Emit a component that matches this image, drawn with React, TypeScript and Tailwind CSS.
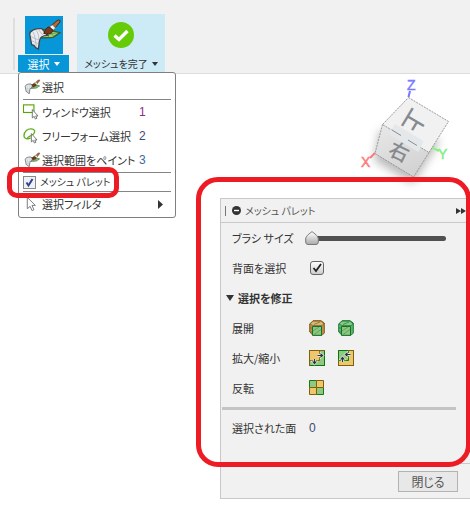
import React, { useState } from "react";

function PaintIcon({ className }: { className: string }) {
  return (
    <svg viewBox="0 0 114 114" className={className} aria-hidden="true">
      <path d="M46 40 L72 42 L105 50 L84 64 L48 66 Z" fill="#9fce7c" stroke="#345f2b" strokeWidth="4" />
      <path d="M60 44 L72 64 M76 46 L86 62 M52 58 L98 50" stroke="#4f8a3c" strokeWidth="2" fill="none" />
      <path
        d="M14 54 C14 44 32 36 50 38 L68 58 C52 58 44 64 43 76 L40 99 L32 95 L27 88 L20 86 Z"
        fill="#e9ebef"
        stroke="#3f474e"
        strokeWidth="4"
      />
      <path
        d="M24 48 C30 58 32 76 34 92 M34 43 C42 54 41 64 41 72 M18 62 L40 72 M20 74 L40 84 M40 40 L54 58"
        stroke="#a5adb5"
        strokeWidth="2"
        fill="none"
      />
      <path d="M80 28 L96 14 Q106 8 105 18 L90 36 Z" fill="#b86a33" stroke="#4c2614" strokeWidth="3" />
      <path d="M73 33 L82 26 L92 36 L84 43 Z" fill="#f4f4f4" stroke="#555" strokeWidth="2" />
      <path d="M56 52 C60 48 61 34 73 33 L84 43 C82 54 68 56 56 52 Z" fill="#7b3818" stroke="#42200f" strokeWidth="3" />
    </svg>
  );
}

function Pointer() {
  return <path d="M11 8 V19 L13.5 17 L15 20.5 L17 19.5 L15.5 16.5 H18.5 Z" fill="#fff" stroke="#555" strokeWidth="1" />;
}

function WindowIcon() {
  return (
    <svg viewBox="0 0 20 22" className="h-[22px] w-5" aria-hidden="true">
      <rect x=".5" y="3.5" width="11" height="8" fill="#fff" stroke="#55a800" strokeWidth="1.2" />
      <g transform="translate(1 2) scale(.8)">
        <Pointer />
      </g>
    </svg>
  );
}

function LassoIcon() {
  return (
    <svg viewBox="0 0 20 22" className="h-[22px] w-5" aria-hidden="true">
      <path
        d="M8 13 C5 15 1 14 1 11 C1 6 5 3 9 3.5 C13 4 13 7 11 9 C9 11 5 11 4.5 13.5"
        fill="none"
        stroke="#62b01b"
        strokeWidth="1.4"
      />
      <g transform="translate(0 2) scale(.8)">
        <Pointer />
      </g>
    </svg>
  );
}

function FilterIcon() {
  return (
    <svg viewBox="0 0 20 22" className="h-[22px] w-5" aria-hidden="true">
      <path d="M4.5 4 V16 L7.5 13.5 L9.5 18 L11.5 17 L9.5 12.5 H13 Z" fill="#fff" stroke="#777" />
    </svg>
  );
}

function BlockIcon({ green }: { green?: boolean }) {
  const line = green ? "#1d7a38" : "#80601c";
  const fill = green ? "#63b568" : "#b98f4c";
  return (
    <svg viewBox="0 0 16 16" className="size-4" aria-hidden="true">
      <path d="M4 .7 H12 L15.3 3 V13 L13 15.3 H4 L.7 12 V4 Z" fill={fill} stroke={line} />
      <path d="M1 4 L4 1.2 H12 L15 4 L13 5.5 H4 Z" fill={green ? "#8bcb88" : "#d8b87c"} stroke={line} strokeWidth=".7" />
      <path d="M1 8 H4 M1 12 H4 M5 4.500 L11 2" stroke={line} strokeWidth=".7" fill="none" />
      <path d="M3.500 6.500 H12.500 V15.300 H3.500 Z" fill="#8fc584" stroke="#147326" />
      <path d="M4 11 L10 7 M5 14.500 L12 9.500" stroke="#4f9a4c" strokeWidth=".8" />
    </svg>
  );
}

function Arrows({ line, heads }: { line: string; heads: string }) {
  return (
    <>
      <path d={line} stroke="#e3ecd6" strokeWidth="3" fill="none" />
      <path d={heads} stroke="#e3ecd6" strokeWidth="1.4" fill="#e3ecd6" />
      <path d={line} stroke="#26343b" strokeWidth="1.2" fill="none" />
      <path d={heads} fill="#26343b" />
    </>
  );
}

function GrowIcon() {
  return (
    <svg viewBox="0 0 16 16" className="size-4" aria-hidden="true">
      <rect x=".5" y=".5" width="15" height="15" fill="#8ec982" stroke="#80600a" />
      <path d="M1 1 H10.5 V10.5 H1 Z" fill="#eec76c" />
      <path d="M10.5 1 V10.5 H1" fill="none" stroke="#80600a" />
      <path d="M15.5 1 V15.5 H1" fill="none" stroke="#08780e" />
      <Arrows line="M8.500 5.500 H12 M5.500 9 V12" heads="M11.500 3 L14.500 5.500 L11.500 8 Z M3 11.500 L5.500 14.500 L8 11.500 Z" />
    </svg>
  );
}

function ShrinkIcon() {
  return (
    <svg viewBox="0 0 16 16" className="size-4" aria-hidden="true">
      <rect x=".5" y=".5" width="15" height="15" fill="#eec76c" stroke="#80600a" />
      <path d="M.5 .5 H10.5 V10.5 H.5 Z" fill="#8ec982" stroke="#08780e" />
      <Arrows line="M12.500 4.500 H9 M4.500 12 V9" heads="M9.500 2 L6.500 4.500 L9.500 7 Z M2 9.500 L4.500 6.500 L7 9.500 Z" />
    </svg>
  );
}

function InvertIcon() {
  return (
    <svg viewBox="0 0 16 16" className="size-4" aria-hidden="true">
      <path d="M.5 .5 H7.500 V7.500 H.5 Z M7.500 7.500 H14.500 V14.500 H7.500 Z" fill="#8ec982" stroke="#187518" />
      <path d="M7.500 .5 H14.500 V7.500 H7.500 Z M.5 7.500 H7.500 V14.500 H.5 Z" fill="#eec76c" stroke="#80600a" />
    </svg>
  );
}

function Toolbar() {
  return (
    <header className="flex h-[74px] items-start border-b border-[#dcdcdc] bg-[#f1f1f1] pl-[13px]">
      <span className="mt-[18px] h-[52px] w-0.5 bg-[#dedede]" />
      <button type="button" className="mt-4 ml-[3px] flex w-[51px] flex-col items-center gap-px text-white">
        <span className="size-[38px] bg-[#0796d8]">
          <PaintIcon className="size-[38px]" />
        </span>
        <span className="flex h-[17px] w-full items-center justify-center gap-1 bg-[#0796d8]">
          選択
          <svg viewBox="0 0 6 4" className="h-1 w-1.5" aria-hidden="true">
            <path d="M0 0 H6 L3 4 Z" fill="currentColor" />
          </svg>
        </span>
      </button>
      <button type="button" className="mt-3.5 ml-2 flex h-[58px] w-[88px] flex-col items-center bg-[#cdeaf7] pt-2">
        <svg viewBox="0 0 26 26" className="size-[26px]" aria-hidden="true">
          <circle cx="13" cy="13" r="13" fill="#65cb06" />
          <path d="M6.5 13.5 L11 17.5 L19.5 9" fill="none" stroke="#fff" strokeWidth="3.4" />
        </svg>
        <span className="mt-[7px] flex h-[17px] items-center gap-1 text-[10px] whitespace-nowrap">
          メッシュを完了
          <svg viewBox="0 0 6 4" className="h-1 w-1.5" aria-hidden="true">
            <path d="M0 0 H6 L3 4 Z" fill="currentColor" />
          </svg>
        </span>
      </button>
    </header>
  );
}

function MenuItem({ icon, label, shortcut }: { icon: React.ReactNode; label: string; shortcut?: React.ReactNode }) {
  return (
    <button type="button" className="flex h-6 w-full items-center whitespace-nowrap">
      <span className="flex w-[19px] shrink-0 items-center">{icon}</span>
      <span className="text-left">{label}</span>
      {shortcut}
    </button>
  );
}

function Shortcut({ value, className }: { value: string; className: string }) {
  return <span className={`absolute left-[120px] font-["Liberation_Sans"] text-xs ${className}`}>{value}</span>;
}

function SelectMenu() {
  return (
    <div className="absolute top-[72px] left-[18px] w-[158px] rounded-[3px] border border-[#7f7f7f] bg-white px-1 pt-0.5 pb-px">
      <MenuItem icon={<PaintIcon className="size-[18px]" />} label="選択" />
      <hr className="border-[#858585]" />
      <MenuItem icon={<WindowIcon />} label="ウィンドウ選択" shortcut={<Shortcut value="1" className="text-[#8d2a80]" />} />
      <MenuItem icon={<LassoIcon />} label="フリーフォーム選択" shortcut={<Shortcut value="2" className="text-[#41477d]" />} />
      <MenuItem
        icon={<PaintIcon className="size-[18px]" />}
        label="選択範囲をペイント"
        shortcut={<Shortcut value="3" className="text-[#3c6c9b]" />}
      />
      <div className="relative flex h-5 items-center border-y border-[#858585]">
        <label className="flex items-center gap-1 text-[10px] whitespace-nowrap">
          <span className="relative size-[13px]">
            <input
              type="checkbox"
              defaultChecked
              className="peer block size-[13px] appearance-none border border-[#888] bg-[#eef1f5]"
            />
            <svg viewBox="0 0 13 13" className="pointer-events-none absolute inset-0 hidden peer-checked:block" aria-hidden="true">
              <path d="M3.5 6.5 L5.5 9.5 L9.5 3" fill="none" stroke="#31428e" strokeWidth="2" />
            </svg>
          </span>
          メッシュ パレット
        </label>
        <div className="pointer-events-none absolute -top-1.5 -left-4 h-[31px] w-[112px] rounded-[10px] border-5 border-[#ed1c24]" />
      </div>
      <MenuItem
        icon={<FilterIcon />}
        label="選択フィルタ"
        shortcut={
          <svg viewBox="0 0 5 9" className="mr-2 ml-auto h-[9px] w-[5px]" aria-hidden="true">
            <path d="M0 0 L5 4.5 L0 9 Z" fill="#333" />
          </svg>
        }
      />
    </div>
  );
}

function ViewCube() {
  return (
    <svg viewBox="350 70 120 125" className="absolute top-[70px] left-[350px] h-[125px] w-[120px]" role="img" aria-label="ビューキューブ">
      <defs>
        <linearGradient id="front" x1="0" y1="0" x2=".4" y2="1">
          <stop offset="0" stopColor="#e9e9e9" />
          <stop offset="1" stopColor="#d3d3d3" />
        </linearGradient>
        <filter id="shade" x="-30%" y="-30%" width="160%" height="160%">
          <feGaussianBlur stdDeviation="5" />
        </filter>
      </defs>
      <path d="M380 130 L374 160 L413 184 L440 140 Z" fill="#8b8b8b" opacity=".6" filter="url(#shade)" />
      <path d="M408.5 97 L410 91" stroke="#7777ff" strokeWidth="2" />
      <path d="M375 153 L370 158" stroke="#ff7777" strokeWidth="2" />
      <path d="M431 147 L439 151" stroke="#8df08d" strokeWidth="2.4" />
      <path d="M408.5 97.5 L448.5 121.5 L429 152.5 L382.5 124.5 Z" fill="#f1f1f1" />
      <path d="M382.5 124.5 L429 152.5 L413.5 177 L375 153.5 Z" fill="url(#front)" />
      <path
        d="M408.5 97.5 L448.5 121.5 L429 152.5 L382.5 124.5 Z M382.5 124.5 L375 153.5 L413.5 177 L429 152.5"
        fill="none"
        stroke="#999"
        strokeDasharray="2 1"
      />
      <path d="M395 124 L423.5 141 L418.5 152 L389 134 Z" fill="#e5e8ea" />
      <path d="M392 130 L401 135.500 M408 140 L417 145.500" stroke="#8c8c8c" />
      <g fill="#868a8f" textAnchor="middle" fontWeight="500">
        <text transform="translate(414 121) rotate(121)" y="8" fontSize="23">上</text>
        <text transform="translate(399 152) rotate(26)" y="7" fontSize="20">右</text>
      </g>
      <g className='font-["Liberation_Sans"]' fontSize="14">
        <text x="407" y="90" fill="#7b7bff" stroke="#7b7bff" strokeWidth=".5">Z</text>
        <text x="361" y="167" fill="#ff7b7b" stroke="#ff7b7b" strokeWidth=".5">X</text>
        <text x="438" y="159" fill="#85ee85" stroke="#85ee85" strokeWidth=".5">Y</text>
      </g>
    </svg>
  );
}

function Row({ label, children }: { label: string; children: React.ReactNode }) {
  return (
    <div className="flex h-[30px] items-center">
      <span className="w-[77px] shrink-0 whitespace-nowrap">{label}</span>
      {children}
    </div>
  );
}

function BrushSlider() {
  const [size, setSize] = useState(0);
  return (
    <div className="relative -ml-1 flex h-4 flex-1 items-center">
      <div className="ml-1.5 h-[5px] flex-1 rounded-full bg-[#515151]" />
      <svg
        viewBox="0 0 14 15"
        className="absolute h-[15px] w-3.5"
        style={{ left: `calc((100% - 14px) * ${size / 100})` }}
        aria-hidden="true"
      >
        <defs>
          <linearGradient id="thumb" x1="0" y1="0" x2="0" y2="1">
            <stop offset="0" stopColor="#fff" />
            <stop offset="1" stopColor="#aaa" />
          </linearGradient>
        </defs>
        <path d="M7 .7 C9 2 13.3 5 13.3 8 V11 Q13.3 13.500 11 13.500 H3 Q.7 13.500 .7 11 V8 C.7 5 5 2 7 .7 Z" fill="url(#thumb)" stroke="#777" />
      </svg>
      <input
        type="range"
        aria-label="ブラシ サイズ"
        value={size}
        onChange={(e) => setSize(Number(e.target.value))}
        className="absolute inset-0 w-full opacity-0"
      />
    </div>
  );
}

function MeshPalette() {
  return (
    <section className="relative border border-r-0 border-[#c8c8c8] bg-[#f1f1f1]">
      <div className="flex h-6 items-center border-b border-[#c8c8c8] pr-1 pl-0.5 text-[10px] text-[#555]">
        <span className="h-2.5 w-[3px] border-r border-[#777]" />
        <button type="button" aria-label="折りたたむ" className="mr-1 ml-1.5">
          <svg viewBox="0 0 9 9" className="size-[9px]" aria-hidden="true">
            <circle cx="4.5" cy="4.5" r="4.5" fill="#333" />
            <path d="M2 4.500 H7" stroke="#fff" strokeWidth="1.4" />
          </svg>
        </button>
        <h2>メッシュ パレット</h2>
        <button type="button" aria-label="ドッキング" className="ml-auto">
          <svg viewBox="0 0 10 6" className="h-1.5 w-2.5" aria-hidden="true">
            <path d="M0 0 L5 3 L0 6 Z M5 0 L10 3 L5 6 Z" fill="#333" />
          </svg>
        </button>
      </div>
      <div className="pr-6 pl-[11px]">
        <Row label="ブラシ サイズ">
          <BrushSlider />
        </Row>
        <Row label="背面を選択">
          <span className="relative ml-px size-[14px]">
            <input
              type="checkbox"
              aria-label="背面を選択"
              defaultChecked
              className="peer block size-3.5 appearance-none rounded-[3px] border border-[#666] bg-linear-to-b from-white to-[#ccc]"
            />
            <svg viewBox="0 0 14 14" className="pointer-events-none absolute inset-0 hidden peer-checked:block" aria-hidden="true">
              <path d="M3.500 7 L6 10 L11 3" fill="none" stroke="#222" strokeWidth="1.8" />
            </svg>
          </span>
        </Row>
        <button type="button" className="-ml-1.5 flex h-[30px] items-center gap-1 font-bold">
          <svg viewBox="0 0 8 6" className="h-1.5 w-2" aria-hidden="true">
            <path d="M0 0 H8 L4 6 Z" fill="#333" />
          </svg>
          選択を修正
        </button>
        <Row label="展開">
          <div className="flex gap-[13px]">
            <button type="button" aria-label="面を展開"><BlockIcon /></button>
            <button type="button" aria-label="すべて展開"><BlockIcon green /></button>
          </div>
        </Row>
        <Row label="拡大/縮小">
          <div className="flex gap-[13px]">
            <button type="button" aria-label="拡大"><GrowIcon /></button>
            <button type="button" aria-label="縮小"><ShrinkIcon /></button>
          </div>
        </Row>
        <Row label="反転">
          <button type="button" aria-label="反転"><InvertIcon /></button>
        </Row>
      </div>
      <hr className="mt-1 mr-3.5 ml-px border-t-3 border-[#c4c4c4]" />
      <div className="pt-[3px] pb-5 pl-[11px]">
        <Row label="選択された面">
          <span className='font-["Liberation_Sans"] text-xs text-[#414a70]'>0</span>
        </Row>
      </div>
      <div className="flex justify-end border-t border-[#c8c8c8] pt-[7px] pr-3 pb-1.5">
        <button type="button" className="h-[21px] w-[60px] border border-[#b3b3b3] bg-[#e8e8e8] text-xs leading-none text-[#555]">
          閉じる
        </button>
      </div>
      <div className="pointer-events-none absolute -top-[22px] -right-px bottom-[31px] -left-[25px] rounded-[22px] border-5 border-[#ed1c24]" />
    </section>
  );
}

export default function App() {
  return (
    <div className='relative min-h-screen overflow-hidden bg-white font-["Noto_Sans_CJK_JP",sans-serif] text-[11px] leading-4 text-[#333] [font-feature-settings:"palt"]'>
      <Toolbar />
      <ViewCube />
      <SelectMenu />
      <main className="pt-[124px] pb-2 pl-[220px]">
        <MeshPalette />
      </main>
    </div>
  );
}
